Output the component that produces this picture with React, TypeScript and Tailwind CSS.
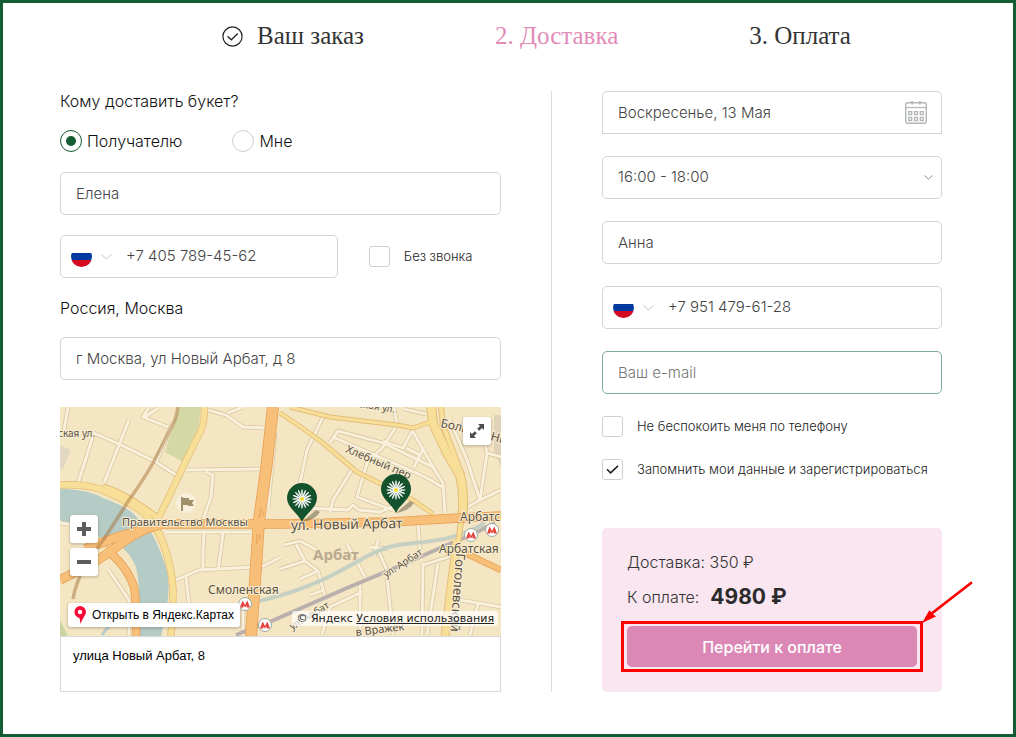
import React from "react";

const field =
  "block h-[43px] w-full rounded-[5px] border border-[#d4d4d4] bg-white px-[15px] text-[15px] font-light text-[#444] outline-none placeholder:text-[#777]";

function Chevron({ className }: { className: string }) {
  return (
    <svg className={className} viewBox="0 0 11 6" fill="none" stroke="currentColor" aria-hidden="true">
      <path d="M.5.5 5.5 5l5-4.5" />
    </svg>
  );
}

function PhoneField({ label, value }: { label: string; value: string }) {
  return (
    <div className="flex h-[43px] w-full items-center rounded-[5px] border border-[#d4d4d4] bg-white">
      <button type="button" aria-label="Код страны" className="ml-2.5 flex items-center gap-[9px]">
        <svg className="h-[21px] w-[21px]" viewBox="0 0 21 21" aria-hidden="true">
          <clipPath id="flagRound">
            <circle cx="10.5" cy="10.5" r="10.5" />
          </clipPath>
          <g clipPath="url(#flagRound)">
            <path d="M0 0h21v7H0z" fill="#fff" />
            <path d="M0 7h21v7H0z" fill="#0039a0" />
            <path d="M0 14h21v7H0z" fill="#d30a22" />
          </g>
        </svg>
        <Chevron className="h-1.5 w-[11px] text-[#c4c4c4]" />
      </button>
      <input
        type="tel"
        aria-label={label}
        defaultValue={value}
        className="ml-3.5 min-w-0 flex-1 bg-transparent text-[15px] font-light text-[#444] outline-none"
      />
    </div>
  );
}

function Check({ label, checked }: { label: string; checked?: boolean }) {
  return (
    <label className="flex items-start gap-[14px] text-[13px] font-[350] leading-5 text-[#222]">
      <span className="grid h-[21px] w-[21px] shrink-0 place-items-center">
        <input
          type="checkbox"
          defaultChecked={checked}
          className="peer h-[21px] w-[21px] appearance-none rounded-[3px] border border-[#cfcfcf] bg-white [grid-area:1/1]"
        />
        <svg
          className="pointer-events-none hidden h-[9px] w-[13px] [grid-area:1/1] peer-checked:block"
          viewBox="0 0 13 9"
          fill="none"
          stroke="#222"
          strokeWidth="1.6"
          aria-hidden="true"
        >
          <path d="M1 4.2 4.6 7.8 12 .8" />
        </svg>
      </span>
      {label}
    </label>
  );
}

function Radio({ label, checked }: { label: string; checked?: boolean }) {
  return (
    <label className="flex items-center gap-[5px] text-[16px] font-[350] leading-5 text-[#111]">
      <span className="grid h-[22px] w-[22px] place-items-center">
        <input
          type="radio"
          name="recipient"
          defaultChecked={checked}
          className="peer h-[22px] w-[22px] appearance-none rounded-full border border-[#cfcfcf] [grid-area:1/1] checked:border-[#145c34]"
        />
        <span className="pointer-events-none hidden h-2.5 w-2.5 rounded-full bg-[#145c34] [grid-area:1/1] peer-checked:block" />
      </span>
      {label}
    </label>
  );
}

const streets = [
  "M8 0 4 23",
  "M34 26 61 38 96 55 116 68",
  "M69 13 44 76",
  "M34 26 18 76",
  "M108 20 83 10 89 0M85 10 98 1",
  "M113 16 96 55",
  "M124 63 199 62",
  "M146 65 153 68 151 90 143 113",
  "M148 3 166 8 183 20 206 21M168 6 183 0",
  "M215 26 208 100",
  "M106 125H191M144 126 143 143V163M163 126 161 143 158 163",
  "M116 173 139 163 193 160M126 170 129 196",
  "M199 161 221 150M183 203V228",
  "M48 162 69 193V228",
  "M0 116 28 120",
  "M263 10 247 43 240 76",
  "M270 36 278 24 323 36 373 60",
  "M273 30 303 43 343 60 367 71 382 80",
  "M337 18 323 40 307 56 297 90 333 103",
  "M353 23 343 41 323 34M346 41 360 48 354 60M360 48 364 40",
  "M352 23 373 60 383 76 385 106",
  "M293 61 273 93 270 105",
  "M245 101 288 103 293 98 299 103 320 105 334 99",
  "M390 13 407 53 420 93 441 83",
  "M423 26 427 46 420 93M427 46 441 50M400 104 420 93",
  "M358 116 360 143",
  "M224 138 240 134 257 143M310 140 330 142M314 150 318 133",
  "M220 162 245 154 258 164 266 193M245 154 236 137M258 164 240 172M250 188 264 183",
  "M287 137 305 170M300 176 300 228M327 170 333 228M318 143 330 170",
  "M363 156 362 228M378 156 367 228M363 158 395 148",
  "M400 193 441 200M418 197 410 228M302 185 270 200 262 228",
  "M344 2 366 7M337 18 334 0",
];

function DaisyPin({ x, y }: { x: number; y: number }) {
  const petals = Array.from({ length: 16 }, (_, i) => i * 22.5);
  return (
    <g transform={`translate(${x} ${y})`}>
      <path d="M0 23 14 11 18 13Q13 21 0 23Z" fill="#66573f" opacity=".5" />
      <path d="M0 23C-3 15-15 9-15-1A15 15 0 0 1 15-1C15 9 3 15 0 23Z" fill="#14512d" />
      {petals.map((a) => (
        <ellipse key={a} cx="0" cy="-6" rx=".8" ry="3.8" fill="#fff" transform={`rotate(${a})`} />
      ))}
      <circle r="3" fill="#fff" />
      <circle r="2" fill="#f6d922" />
    </g>
  );
}

function Metro({ x, y }: { x: number; y: number }) {
  return (
    <g transform={`translate(${x} ${y})`}>
      <circle r="6.5" fill="#fff" stroke="#9aa99c" />
      <path d="M-5 3.5-2.4-3.5 0 1 2.4-3.5 5 3.5H1.7L1.5 1.2 0 3.5-1.5 1.2-1.7 3.5Z" fill="#e4413b" />
    </g>
  );
}

function CityMap() {
  return (
    <svg
      className="block h-full w-full font-['Noto_Sans',sans-serif]"
      viewBox="0 0 441 229"
      preserveAspectRatio="xMidYMid slice"
      role="img"
      aria-label="Карта"
    >
      <path d="M0 0H441V229H0Z" fill="#f5e6c3" />
      <path d="M119 0H141L138 23 123 55 105 45Z" fill="#d3d8a5" />
      <path d="M0 38 11 43 3 62H0Z" fill="#e2d8c3" />
      <path d="M0 213 8 229H0Z" fill="#c9d5a0" />
      <path d="M434 8H441V60L434 44Z" fill="#dfd3ba" />
      <path
        d="M0 82C16 82 30 84 43 91 62 98 73 104 79 113 92 122 98 137 106 160 110 173 110 193 101 229H78C80 205 80 177 76 160 71 150 68 145 60 139 42 132 22 122 0 113Z"
        fill="#b5cbc5"
      />
      <g fill="none" strokeLinejoin="round">
        <g stroke="#dac9a3" strokeWidth="4.5">
          {streets.map((d) => (
            <path key={d} d={d} />
          ))}
        </g>
        <g stroke="#f9f1dc" strokeWidth="2.8">
          {streets.map((d) => (
            <path key={d} d={d} />
          ))}
        </g>
        <path d="M42 228Q52 212 75 207" stroke="#b9ceca" strokeWidth="3" />
        <path d="M186 197C230 188 260 175 280 164 305 151 318 141 338 138 370 134 395 134 425 116" stroke="#c5d0c2" strokeWidth="4" />
        <path d="M176 228Q192 221 205 217L287 181 330 163 387 138 411 128 435 116" stroke="#b9b0ad" strokeWidth="4" />
        <g stroke="#e3bd79">
          <path strokeWidth="7.5" d="M0 78Q22 77 40 82 65 92 84 106 97 119 103 136 112 160 113 183 113 207 111 229" />
          <path strokeWidth="7" d="M43 80Q62 85 98 111" />
          <path strokeWidth="7" d="M144 0Q146 18 136 33L99 110" />
          <path strokeWidth="5" d="M220 6Q240 19 263 36L297 65 353 93 373 107M230 0 270 10 337 18 353 21 373 14" />
          <path strokeWidth="10" d="M371-2 373 16 387 46 400 68Q405 88 402 112" />
          <path strokeWidth="6" d="M381 0 383 18 402 68M402 108 397 143 385 229" />
          <path strokeWidth="9" d="M397 133 385 229" />
        </g>
        <g stroke="#f8df98">
          <path strokeWidth="6" d="M0 78Q22 77 40 82 65 92 84 106 97 119 103 136 112 160 113 183 113 207 111 229" />
          <path strokeWidth="5" d="M43 80Q62 85 98 111" />
          <path strokeWidth="5.5" d="M144 0Q146 18 136 33L99 110" />
          <path strokeWidth="3.2" d="M220 6Q240 19 263 36L297 65 353 93 373 107M230 0 270 10 337 18 353 21 373 14" />
          <path strokeWidth="8" d="M371-2 373 16 387 46 400 68Q405 88 402 112" />
          <path strokeWidth="4" d="M381 0 383 18 402 68M402 108 397 143 385 229" />
          <path strokeWidth="7" d="M397 133 385 229" />
        </g>
        <g stroke="#e79f55">
          <path strokeWidth="9.5" d="M441 109 400 111 330 115 221 117H103Q82 121 62 136T29 158L0 173M103 117 60 129 25 142" />
          <path strokeWidth="8.5" d="M45 142Q66 157 74 180 77 195 76 229" />
          <path strokeWidth="12" d="M213 0 206 63 199 113 196 160 191 229" />
          <path strokeWidth="6.5" d="M403 145 441 163" />
        </g>
        <g stroke="#f7bf78">
          <path strokeWidth="8" d="M441 109 400 111 330 115 221 117H103Q82 121 62 136T29 158L0 173M103 117 60 129 25 142" />
          <path strokeWidth="7" d="M45 142Q66 157 74 180 77 195 76 229" />
          <path strokeWidth="10.5" d="M213 0 206 63 199 113 196 160 191 229" />
          <path strokeWidth="5" d="M403 145 441 163" />
        </g>
        <path
          d="M118 0Q116 13 111 21L93 56Q84 72 69 93L44 132 26 156Q15 178 13 192"
          stroke="#a8763f"
          strokeWidth="3.5"
          opacity=".5"
        />
        <path d="M201 101 199 111M203 104V109M197 127V137M200 127V133" stroke="#e79f55" />
      </g>
      <circle cx="126" cy="96" r="10" fill="#f9f0dc" />
      <path d="M121 90H123V91H129V93H134L132 96 134 99H128V98H123V104H121Z" fill="#a1906c" />
      <g fill="#5b5242" stroke="#f8edd3" strokeWidth="2" paintOrder="stroke" fontSize="11">
        <text x="-2" y="30" fontSize="10">ская ул.</text>
        <text x="62" y="119">Правительство Москвы</text>
        <text x="231" y="123" fontSize="14" transform="rotate(-1 231 123)">ул. Новый Арбат</text>
        <text x="285" y="45" fontSize="11" transform="rotate(23 285 45)">Хлебный пер</text>
        <text x="298" y="0" fontSize="10" transform="rotate(9 298 0)">ская ул.</text>
        <text x="380" y="20" fontSize="12" transform="rotate(12 380 20)">Больш</text>
        <text x="430" y="33" fontSize="12" transform="rotate(15 430 33)">Ни</text>
        <text x="400" y="114" fontSize="12">Арбатс</text>
        <text x="379" y="146" fontSize="12">Арбатская</text>
        <text x="148" y="187" fontSize="12">Смоленская</text>
        <text x="326" y="171" fontSize="10" transform="rotate(-33 326 171)">ул. Арбат</text>
        <text x="232" y="223" fontSize="10" transform="rotate(-31 232 223)">ул. Арбат</text>
        <text x="396" y="146" fontSize="13" transform="rotate(94 396 146)">Гоголевский</text>
        <text x="296" y="229" fontSize="11" transform="rotate(-7 296 229)">в Вражек</text>
      </g>
      <text x="253" y="153" fontSize="15" fontWeight="700" fill="#b9a98e">Арбат</text>
      <Metro x={411} y={128} />
      <Metro x={432} y={123} />
      <Metro x={185} y={197} />
      <Metro x={205} y={218} />
      <DaisyPin x={242} y={92} />
      <DaisyPin x={336} y={83} />
    </svg>
  );
}

const mapButton =
  "grid h-7 w-7 place-items-center rounded-[3px] bg-white shadow-[0_1px_2px_1px_rgba(0,0,0,0.15)]";

function DeliveryMap() {
  return (
    <div className="mt-[27px]">
      <div className="relative h-[229px] overflow-hidden">
        <CityMap />
        <div className="absolute left-2.5 top-[108px] flex flex-col gap-[5px]">
          <button type="button" aria-label="Приблизить" className={mapButton}>
            <svg className="h-3.5 w-3.5" viewBox="0 0 14 14" aria-hidden="true">
              <path d="M5 0H9V5H14V9H9V14H5V9H0V5H5Z" fill="#5c5c5c" />
            </svg>
          </button>
          <button type="button" aria-label="Отдалить" className={mapButton}>
            <svg className="h-3.5 w-3.5" viewBox="0 0 14 14" aria-hidden="true">
              <path d="M0 5H14V9H0Z" fill="#5c5c5c" />
            </svg>
          </button>
        </div>
        <button type="button" aria-label="На весь экран" className={`${mapButton} absolute right-2.5 top-2.5`}>
          <svg className="h-3.5 w-3.5" viewBox="0 0 14 14" fill="#4d4d4d" aria-hidden="true">
            <path d="M8 0H14V6L12 4 9.2 6.8 7.2 4.8 10 2ZM6 14H0V8L2 10 4.8 7.2 6.8 9.2 4 12Z" />
          </svg>
        </button>
        <a
          href="#maps"
          className="absolute bottom-[9px] left-2 flex h-6 items-center gap-1.5 whitespace-nowrap rounded-[3px] bg-white px-1.5 font-['Liberation_Sans',sans-serif] text-[12px] text-black shadow-[0_1px_2px_1px_rgba(0,0,0,0.15)]"
        >
          <svg className="h-[18px] w-3" viewBox="0 0 12 18" aria-hidden="true">
            <path
              fillRule="evenodd"
              d="M6 0A6 6 0 0 1 12 6C12 9 9 11 6.5 18L5.5 11.9A6 6 0 0 1 6 0ZM6 3.8A2.2 2.2 0 1 0 6 8.2 2.2 2.2 0 0 0 6 3.8Z"
              fill="#f50b35"
            />
          </svg>
          Открыть в Яндекс.Картах
        </a>
        <p className="absolute bottom-2.5 right-[3px] whitespace-nowrap rounded-[3px] bg-white/70 px-1 font-['DejaVu_Sans',sans-serif] text-[11px] leading-[15px] text-[#222]">
          © Яндекс{" "}
          <a href="#terms" className="underline">
            Условия использования
          </a>
        </p>
      </div>
      <p className="h-14 border border-[#d9d9d9] px-3 py-2.5 font-['Liberation_Sans',sans-serif] text-[13px] leading-[18px] text-black">
        улица Новый Арбат, 8
      </p>
    </div>
  );
}

export default function App() {
  return (
    <main className="min-h-screen border-[3px] border-[#145c34] bg-white pb-[42px] font-['Inter',sans-serif] text-[#222]">
      <ol className="ml-[219px] flex h-[88px] items-start gap-x-[131px] whitespace-nowrap pt-[17px] font-['Liberation_Serif',serif] text-[25px] leading-8 text-[#333]">
        <li className="flex items-center gap-3.5">
          <svg className="h-[21px] w-[21px]" viewBox="0 0 21 21" fill="none" stroke="#222" strokeWidth="1.2" aria-hidden="true">
            <circle cx="10.5" cy="10.5" r="9.6" />
            <path d="M5.5 10.2 9.3 13.8 15.8 7.5" />
          </svg>
          Ваш заказ
        </li>
        <li aria-current="step" className="text-[#e28bb8]">
          2. Доставка
        </li>
        <li>3. Оплата</li>
      </ol>

      <form className="flex pl-[57px] pr-[71px]">
        <section className="min-w-0 flex-[441_1_0%]">
          <h2 className="text-[16px] font-[350] leading-5 text-[#111]">Кому доставить букет?</h2>
          <div className="mt-[19px] flex gap-[50px]">
            <Radio label="Получателю" checked />
            <Radio label="Мне" />
          </div>
          <input aria-label="Имя получателя" defaultValue="Елена" className={`${field} mt-5`} />
          <div className="mt-5 flex items-center gap-[31px]">
            <div className="w-[63%]">
              <PhoneField label="Телефон получателя" value="+7 405 789-45-62" />
            </div>
            <Check label="Без звонка" />
          </div>
          <h2 className="mt-5 text-[16px] font-[350] leading-5 text-[#111]">Россия, Москва</h2>
          <input aria-label="Адрес" defaultValue="г Москва, ул Новый Арбат, д 8" className={`${field} mt-[19px]`} />
          <DeliveryMap />
        </section>

        <div className="mx-[50px] w-px bg-[#ddd]" />

        <section className="min-w-0 flex-[340_1_0%]">
          <div className="flex flex-col gap-[22px]">
            <div className="flex h-[43px] items-center rounded-t-[5px] border border-[#d4d4d4] pl-[15px] pr-[14px]">
              <input
                aria-label="Дата доставки"
                defaultValue="Воскресенье, 13 Мая"
                className="h-full min-w-0 flex-1 bg-transparent text-[15px] font-light text-[#444] outline-none"
              />
              <button type="button" aria-label="Выбрать дату">
                <svg className="h-[23px] w-[22px]" viewBox="0 0 22 23" fill="none" stroke="#b2b6b4" aria-hidden="true">
                  <rect x=".7" y="1.7" width="20.6" height="20.6" rx="2" strokeWidth="1.4" />
                  <path d="M1 6.5H21" strokeWidth="1.2" />
                  <path d="M7 0V3.6M15 0V3.6" strokeWidth="1.8" />
                  <path
                    d="M3.7 10.7h3v3h-3zM9.5 10.7h3v3h-3zM15.3 10.7h3v3h-3zM3.7 16.5h3v3h-3zM9.5 16.5h3v3h-3zM15.3 16.5h3v3h-3z"
                    strokeWidth="1.3"
                  />
                </svg>
              </button>
            </div>
            <div className="relative">
              <select aria-label="Время доставки" className={`${field} appearance-none`}>
                <option>16:00 - 18:00</option>
              </select>
              <Chevron className="pointer-events-none absolute right-[9px] top-[19px] h-[5px] w-[9px] text-[#777]" />
            </div>
            <input aria-label="Ваше имя" defaultValue="Анна" className={field} />
            <PhoneField label="Ваш телефон" value="+7 951 479-61-28" />
            <input
              type="email"
              aria-label="Ваш e-mail"
              placeholder="Ваш e-mail"
              className="block h-[43px] w-full rounded-[5px] border border-[#7eab94] bg-white px-[15px] text-[15px] font-light outline-none placeholder:text-[#777]"
            />
            <Check label="Не беспокоить меня по телефону" />
            <Check label="Запомнить мои данные и зарегистрироваться" checked />
          </div>

          <div className="mt-12 rounded-[5px] bg-[#f9e6f1] px-[25px] pb-[25px] pt-[22px] font-light text-[#333]">
            <p className="text-[16px] leading-6">Доставка: 350 ₽</p>
            <p className="mt-[7px] flex h-8 items-center gap-[11px] text-[16px]">
              К оплате:
              <strong className="text-[21px] font-bold text-[#2b2b2b]">4980 ₽</strong>
            </p>
            <div className="relative mt-[13px]">
              <button
                type="submit"
                className="block h-[41px] w-full rounded-[5px] bg-[#dc88b6] text-[16px] font-medium text-white"
              >
                Перейти к оплате
              </button>
              <span className="pointer-events-none absolute -inset-x-[6px] -inset-y-[5px] border-[3px] border-[#fe0000]" />
              <svg
                className="pointer-events-none absolute -right-[56px] -top-[45px] h-[44px] w-[51px]"
                viewBox="0 0 51 44"
                aria-hidden="true"
              >
                <path d="M49 2 9 33" stroke="#fe0000" strokeWidth="2.8" strokeLinecap="round" />
                <path d="M0 42 7.5 29 9.5 32 14 35.5Z" fill="#fe0000" />
              </svg>
            </div>
          </div>
        </section>
      </form>
    </main>
  );
}
